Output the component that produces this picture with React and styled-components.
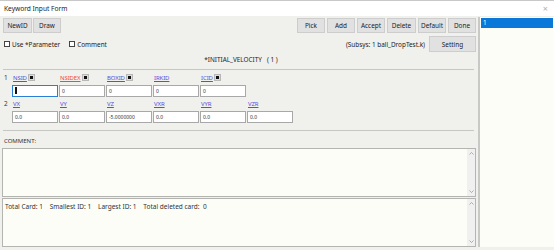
import React from "react";
import styled, { createGlobalStyle } from "styled-components";

const Global = createGlobalStyle`
  html, body { margin: 0; padding: 0; background: #f0f0ec; }
  body { width: 554px; height: 250px; overflow: hidden; font-family: "Noto Sans", "Open Sans", sans-serif; }
  * { box-sizing: border-box; }
`;

const Window = styled.div`
  width: 554px;
  height: 250px;
  display: flex;
  flex-direction: column;
  background: #f0f0ec;
  border-top: 1px solid #c8c8c8;
`;

const TitleBar = styled.div`
  height: 15px;
  background: #ffffff;
  display: flex;
  align-items: center;
  justify-content: space-between;
  padding: 0 4px;
`;

const Title = styled.span`
  font-size: 6.6px;
  color: #222;
`;

const Close = styled.span`
  font-size: 9px;
  color: #b0b0b0;
  margin-right: 2px;
`;

const Body = styled.div`
  flex: 1;
  display: flex;
  min-height: 0;
  padding-bottom: 3px;
`;

const Main = styled.div`
  width: 478px;
  display: flex;
  flex-direction: column;
  padding: 0 2px 0 2px;
`;

const Row = styled.div`
  display: flex;
  align-items: center;
  justify-content: space-between;
  margin-top: ${(p) => p.$mt || 0}px;
  height: ${(p) => p.$h}px;
`;

const Group = styled.div`
  display: flex;
  align-items: center;
  gap: ${(p) => p.$gap || 0}px;
  padding-left: ${(p) => p.$pl || 0}px;
`;

const Btn = styled.button`
  width: ${(p) => p.$w || 28}px;
  height: ${(p) => p.$h || 15}px;
  background: #e1e1e1;
  border: 1px solid #cdcdcd;
  padding: 0;
  font-family: "Noto Sans", sans-serif;
  font-size: 6.4px;
  color: #222;
`;

const CheckLabel = styled.label`
  display: flex;
  align-items: center;
  gap: 2px;
  font-size: 6.4px;
  color: #222;
  margin-right: ${(p) => p.$mr || 0}px;
`;

const CheckBox = styled.span`
  width: 6px;
  height: 6px;
  border: 1px solid #444;
  background: #fff;
`;

const Subsys = styled.span`
  font-size: 6.4px;
  color: #222;
  margin-right: 4px;
`;

const KwTitle = styled.div`
  margin-top: 1px;
  height: 14px;
  line-height: 14px;
  font-size: 6.4px;
  color: #222;
  text-align: center;
  padding-left: 4px;
  white-space: pre;
`;

const Sep = styled.div`
  height: 1px;
  background: #c6c6c2;
  margin: ${(p) => p.$mt}px 2px 0 1px;
`;

const Card = styled.div`
  display: grid;
  grid-template-columns: 7px repeat(6, 46px);
  column-gap: 1px;
  grid-template-rows: 10px 12px 10px 12px;
  row-gap: 2px;
  padding: 3px 0 0 2px;
  align-items: center;
`;

const RowNum = styled.span`
  font-size: 6.4px;
  color: #333;
`;

const FieldHead = styled.div`
  display: flex;
  align-items: center;
  gap: 1.5px;
  padding-left: 1px;
`;

const FieldLink = styled.span`
  font-size: 6px;
  color: ${(p) => (p.$red ? "#f04848" : "#5b4fd8")};
  text-decoration: underline;
  letter-spacing: -0.1px;
`;

const PickBox = styled.span`
  width: 7px;
  height: 7px;
  background: #dcdcdc;
  border: 1px solid #b8b8b8;
  display: flex;
  align-items: center;
  justify-content: center;
  &::after {
    content: "";
    width: 3px;
    height: 3px;
    background: #111;
  }
`;

const Input = styled.div`
  height: 12px;
  background: #fff;
  border: 1px solid ${(p) => (p.$focus ? "#2a7fd4" : "#a8a8a8")};
  font-size: 5px;
  color: #333;
  display: flex;
  align-items: center;
  padding-left: 2px;
`;

const Caret = styled.span`
  width: 1.5px;
  height: 7px;
  background: #111;
`;

const CommentLabel = styled.div`
  margin-top: 4px;
  height: 13px;
  line-height: 13px;
  font-size: 6px;
  color: #333;
  padding-left: 2px;
`;

const TextBox = styled.div`
  height: ${(p) => p.$h}px;
  margin-top: ${(p) => p.$mt || 0}px;
  background: #fdfdf8;
  border: 1px solid #b4b4b0;
  display: flex;
`;

const TextArea = styled.div`
  flex: 1;
  font-size: 6.5px;
  color: #333;
  padding: 3px 0 0 2px;
  white-space: pre;
`;

const ScrollBar = styled.div`
  width: 8px;
  background: #f0f0f0;
  display: flex;
  flex-direction: column;
  justify-content: space-between;
  align-items: center;
  padding: 3px 0;
`;

const List = styled.div`
  flex: 1;
  margin-top: 1px;
  background: #fdfdf8;
  border-left: 2px solid #c8c8c6;
  padding: 1px 1px 0 1px;
`;

const ListItem = styled.div`
  height: 10px;
  line-height: 10px;
  font-size: 6.4px;
  padding-left: 2px;
  background: ${(p) => (p.$sel ? "#0a78d8" : "transparent")};
  color: ${(p) => (p.$sel ? "#fff" : "#222")};
`;

const Chevron = ({ up }) => (
  <svg width="5" height="3" viewBox="0 0 5 3">
    <path d={up ? "M0.5 2.5 L2.5 0.5 L4.5 2.5" : "M0.5 0.5 L2.5 2.5 L4.5 0.5"} stroke="#9a9a9a" strokeWidth="0.8" fill="none" />
  </svg>
);

const Scroll = () => (
  <ScrollBar>
    <Chevron up />
    <Chevron />
  </ScrollBar>
);

const row1 = [
  { n: "NSID", box: true },
  { n: "NSIDEX", box: true, red: true },
  { n: "BOXID", box: true },
  { n: "IRKID" },
  { n: "ICID", box: true },
];
const row1v = ["0", "0", "0", "0", "0"];
const row2 = ["VX", "VY", "VZ", "VXR", "VYR", "VZR"];
const row2v = ["0.0", "0.0", "-5.0000000", "0.0", "0.0", "0.0"];

export default function App() {
  return (
    <>
      <Global />
      <Window>
        <TitleBar>
          <Title>Keyword Input Form</Title>
          <Close>×</Close>
        </TitleBar>
        <Body>
          <Main>
            <Row $mt={2} $h={15}>
              <Group $gap={1} $pl={1}>
                <Btn $w={29}>NewID</Btn>
                <Btn $w={28}>Draw</Btn>
              </Group>
              <Group $gap={2}>
                <Btn>Pick</Btn>
                <Btn>Add</Btn>
                <Btn>Accept</Btn>
                <Btn $w={29}>Delete</Btn>
                <Btn>Default</Btn>
                <Btn>Done</Btn>
              </Group>
            </Row>
            <Row $mt={3} $h={16}>
              <Group $pl={2}>
                <CheckLabel $mr={9}>
                  <CheckBox />
                  Use *Parameter
                </CheckLabel>
                <CheckLabel>
                  <CheckBox />
                  Comment
                </CheckLabel>
              </Group>
              <Group>
                <Subsys>(Subsys: 1 ball_DropTest.k)</Subsys>
                <Btn $w={47} $h={16}>Setting</Btn>
              </Group>
            </Row>
            <KwTitle>{"*INITIAL_VELOCITY   ( 1 )"}</KwTitle>
            <Sep $mt={2} />
            <Card>
              <RowNum>1</RowNum>
              {row1.map((f) => (
                <FieldHead key={f.n}>
                  <FieldLink $red={f.red}>{f.n}</FieldLink>
                  {f.box && <PickBox />}
                </FieldHead>
              ))}
              <span />
              <span />
              {row1v.map((v, i) => (
                <Input key={i} $focus={i === 0}>
                  {i === 0 && <Caret />}
                  {i === 0 ? "" : v}
                </Input>
              ))}
              <span />
              <RowNum>2</RowNum>
              {row2.map((n) => (
                <FieldHead key={n}>
                  <FieldLink>{n}</FieldLink>
                </FieldHead>
              ))}
              <span />
              {row2v.map((v, i) => (
                <Input key={i}>{v}</Input>
              ))}
            </Card>
            <Sep $mt={7} />
            <CommentLabel>COMMENT:</CommentLabel>
            <TextBox $h={50}>
              <TextArea />
              <Scroll />
            </TextBox>
            <TextBox $h={49} $mt={1}>
              <TextArea>{"Total Card: 1    Smallest ID: 1    Largest ID: 1    Total deleted card:  0"}</TextArea>
              <Scroll />
            </TextBox>
          </Main>
          <List>
            <ListItem $sel>1</ListItem>
          </List>
        </Body>
      </Window>
    </>
  );
}
